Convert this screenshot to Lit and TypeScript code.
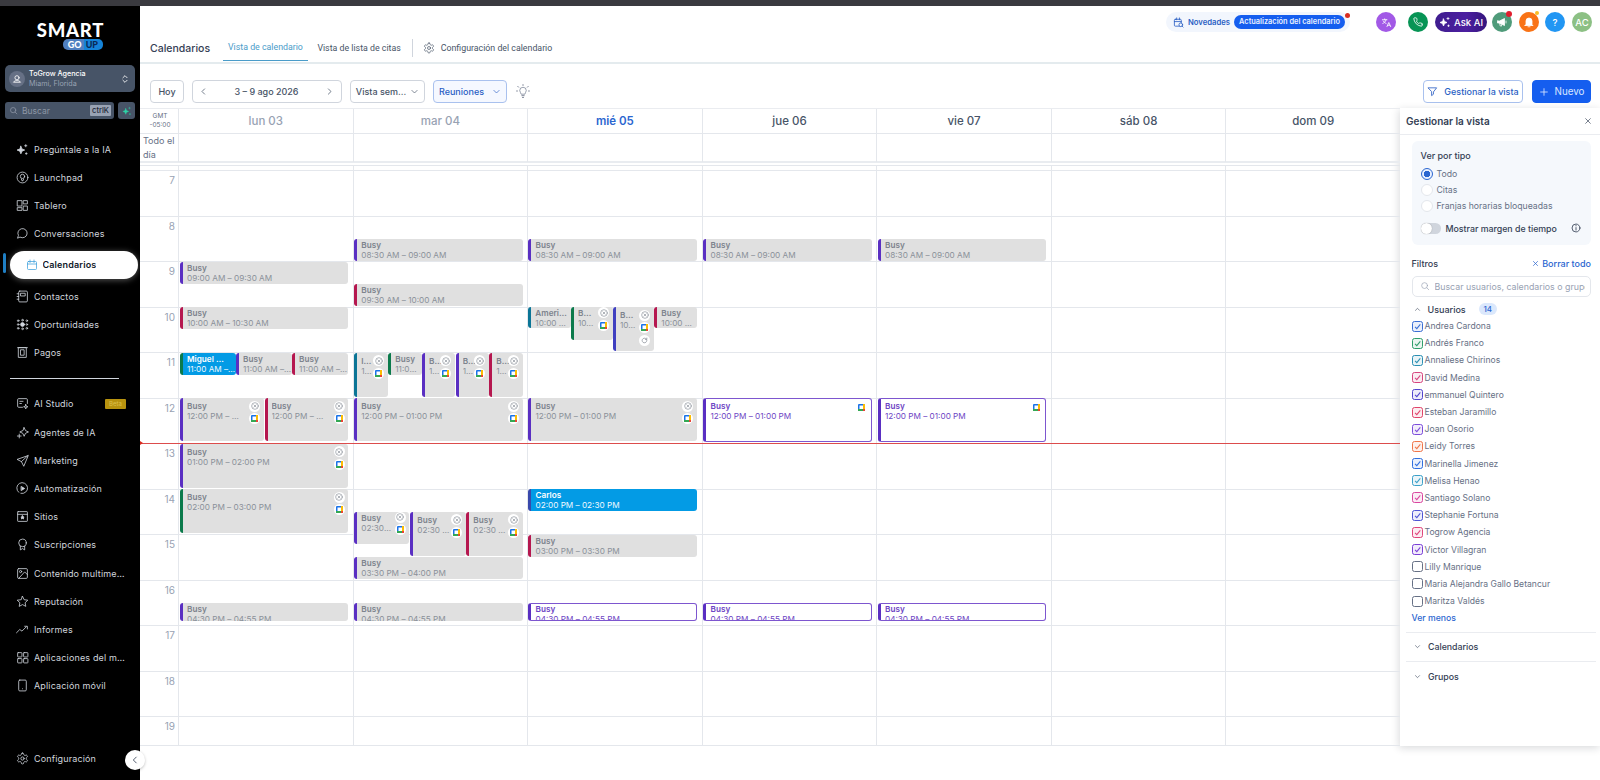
import { LitElement, css, html, svg } from "lit";
import { customElement } from "lit/decorators.js";

const ICONS: Record<string, unknown> = {
  spark: svg`<path d="M9 6l2 5 5 2-5 2-2 5-2-5-5-2 5-2z" fill="currentColor"/><path d="M18 3v4M16 5h4M19 18v3M17.5 19.500h3"/>`,
  launch: svg`<circle cx="12" cy="12" r="10"/><circle cx="12" cy="10" r="4"/><path d="M10 15l1 3h2l1-3"/>`,
  board: svg`<rect x="3" y="3" width="8" height="10"/><rect x="14" y="3" width="7" height="6"/><rect x="14" y="13" width="7" height="8"/><rect x="3" y="16" width="8" height="5"/>`,
  chat: svg`<path d="M3 20l1.500-4.500A8.500 8.500 0 1 1 8 19z"/>`,
  cal: svg`<rect x="3" y="5" width="18" height="16" rx="2"/><path d="M3 10h18M8 2v5M16 2v5"/>`,
  contact: svg`<rect x="5" y="2" width="16" height="20" rx="2"/><rect x="9" y="6" width="8" height="5"/><path d="M2 7h3M2 12h3M2 17h3"/>`,
  opp: svg`<circle cx="12" cy="12" r="3.500" fill="currentColor"/><circle cx="4" cy="5" r="1.500"/><circle cx="4" cy="12" r="1.500"/><circle cx="4" cy="19" r="1.500"/><circle cx="20" cy="5" r="1.500"/><circle cx="20" cy="12" r="1.500"/><circle cx="20" cy="19" r="1.500"/><circle cx="12" cy="4" r="1.500"/><circle cx="12" cy="20" r="1.500"/>`,
  pay: svg`<rect x="5" y="3" width="14" height="18"/><rect x="9" y="7" width="6" height="10"/><path d="M3 3h18"/>`,
  studio: svg`<path d="M12 19H5a2 2 0 0 1-2-2V5a2 2 0 0 1 2-2h14a2 2 0 0 1 2 2v7"/><path d="M7 8h6M7 12h3"/><path d="M18 14l1 3 3 1-3 1-1 3-1-3-3-1 3-1z"/>`,
  agent: svg`<path d="M15 3l2.500 5.500L23 11l-5.500 2.500L15 19l-2.500-5.500L7 11l5.500-2.500z"/><path d="M6 15v7M2.500 18.500h7"/>`,
  send: svg`<path d="M22 3L2 10l8 4 4 8z"/><path d="M22 3L10 14"/>`,
  auto: svg`<path d="M5 19a10 10 0 1 1 4 2"/><path d="M10 8.500l6 3.500-6 3.500z" fill="currentColor"/>`,
  site: svg`<rect x="3" y="3" width="18" height="18" rx="1"/><path d="M3 8h18"/><path d="M12 10.500l1 2 2 .500-1.500 1.500.500 2-2-1-2 1 .500-2L9 13l2-.500z" fill="currentColor"/>`,
  sub: svg`<circle cx="12" cy="9" r="7"/><path d="M8 15v7l4-2.500 4 2.500v-7"/>`,
  media: svg`<rect x="3" y="3" width="18" height="18" rx="2"/><circle cx="8.500" cy="8.500" r="2"/><path d="M21 14l-5-5L5 21"/>`,
  star: svg`<path d="M12 2.500l3 6.200 6.800.900-5 4.700 1.300 6.700-6.100-3.300L5.900 21l1.300-6.700-5-4.700L9 8.700z"/>`,
  trend: svg`<path d="M1 18l6-6 4 3 8-8"/><path d="M16 6h5v5"/>`,
  apps: svg`<rect x="3" y="3" width="8" height="8" rx="1"/><rect x="14" y="3" width="8" height="8" rx="1"/><rect x="3" y="14" width="8" height="8" rx="1"/><rect x="14" y="14" width="8" height="8" rx="1"/>`,
  phone: svg`<rect x="5" y="2" width="14" height="20" rx="2"/><path d="M12 18h.01"/>`,
  gear: svg`<path d="M12.220 2h-.440a2 2 0 0 0-2 2v.180a2 2 0 0 1-1 1.730l-.430.250a2 2 0 0 1-2 0l-.150-.080a2 2 0 0 0-2.730.730l-.220.380a2 2 0 0 0 .730 2.730l.150.100a2 2 0 0 1 1 1.720v.510a2 2 0 0 1-1 1.740l-.150.090a2 2 0 0 0-.730 2.730l.220.380a2 2 0 0 0 2.730.730l.150-.080a2 2 0 0 1 2 0l.430.250a2 2 0 0 1 1 1.730V20a2 2 0 0 0 2 2h.440a2 2 0 0 0 2-2v-.180a2 2 0 0 1 1-1.730l.430-.250a2 2 0 0 1 2 0l.150.080a2 2 0 0 0 2.730-.730l.220-.390a2 2 0 0 0-.730-2.730l-.150-.080a2 2 0 0 1-1-1.740v-.500a2 2 0 0 1 1-1.740l.150-.090a2 2 0 0 0 .730-2.730l-.220-.380a2 2 0 0 0-2.730-.730l-.150.080a2 2 0 0 1-2 0l-.430-.250a2 2 0 0 1-1-1.730V4a2 2 0 0 0-2-2z"/><circle cx="12" cy="12" r="3"/>`,
  search: svg`<circle cx="11" cy="11" r="7"/><path d="M21 21l-4.500-4.500"/>`,
  updown: svg`<path d="M7 9l5-5 5 5M7 15l5 5 5-5"/>`,
  left: svg`<path d="M15 5l-7 7 7 7"/>`,
  right: svg`<path d="M9 5l7 7-7 7"/>`,
  down: svg`<path d="M5 9l7 7 7-7"/>`,
  up: svg`<path d="M5 15l7-7 7 7"/>`,
  bulb: svg`<path d="M8 17c0-2-3-3.500-3-7a7 7 0 0 1 14 0c0 3.500-3 5-3 7z" transform="translate(2.400 3.200) scale(.8)"/><path d="M10 20h4M11 23h2M12 1v1.500M3 4l1.500 1.500M21 4l-1.500 1.500M1 12h1.500M21.500 12H23"/>`,
  filter: svg`<path d="M3 4h18l-7 9v5l-4 3v-8z"/>`,
  plus: svg`<path d="M12 4v16M4 12h16"/>`,
  x: svg`<path d="M5 5l14 14M19 5L5 19"/>`,
  xc: svg`<circle cx="12" cy="12" r="10"/><path d="M8.500 8.500l7 7M15.500 8.500l-7 7"/>`,
  info: svg`<circle cx="12" cy="12" r="9.500"/><path d="M12 6v1M12 11v6"/>`,
  news: svg`<rect x="3" y="5" width="15" height="15" rx="2"/><path d="M3 10h15M8 2v4M14 2v4"/><circle cx="17" cy="17" r="4" fill="#f2f6fd"/><path d="M20 20l2 2"/>`,
  translate: svg`<path d="M3 6h10M8 4v2M11 6c-1 4-4 7-7 8M5 9c1 2 3 4 6 5"/><path d="M13 21l4-9 4 9M14.500 18h5"/>`,
  tel: svg`<path d="M22 17v3a2 2 0 0 1-2.200 2A19.800 19.800 0 0 1 2 4.200 2 2 0 0 1 4 2h3a2 2 0 0 1 2 1.700c.100 1 .400 1.900.700 2.800a2 2 0 0 1-.500 2.100L8 9.900a16 16 0 0 0 6 6l1.300-1.200a2 2 0 0 1 2.100-.500c.900.300 1.800.600 2.800.700A2 2 0 0 1 22 17z"/>`,
  mega: svg`<path d="M3 10v4h4l10 5V5L7 10z" fill="currentColor"/><path d="M7 14l1.500 6h3L10 15M20 10v4"/>`,
  bell: svg`<path d="M6 17V10a6 6 0 0 1 12 0v7l2 2H4z" fill="currentColor"/><path d="M10 21.500h4"/>`,
  user: svg`<circle cx="12" cy="9" r="5"/><path d="M4 19c2-3 5-3 8-3s6 0 8 3z"/>`,
  refresh: svg`<path d="M20 12a8 8 0 1 1-2.500-5.800L20 8.500M20 3.500v5h-5"/>`,
};

const ico = (name: string, size = 14, sw = 1.6) =>
  html`<svg class="ico" width=${size} height=${size} viewBox="0 0 24 24" fill="none" stroke="currentColor" stroke-width=${sw} stroke-linecap="round" stroke-linejoin="round">${ICONS[name]}</svg>`;

const gcal = html`<svg width="7" height="7" viewBox="0 0 7 7"><rect width="7" height="7" rx="1" fill="#1a73e8"/><rect x="5" width="2" height="5" fill="#fbbc04"/><rect y="5" width="5" height="2" fill="#34a853"/><rect x="5" y="5" width="2" height="2" fill="#ea4335"/><rect x="1.500" y="1.500" width="3.500" height="3.500" fill="#fff"/></svg>`;

const nav1 = [
  ["spark", "Pregúntale a la IA"],
  ["launch", "Launchpad"],
  ["board", "Tablero"],
  ["chat", "Conversaciones"],
  ["cal", "Calendarios"],
  ["contact", "Contactos"],
  ["opp", "Oportunidades"],
  ["pay", "Pagos"],
];
const nav2 = [
  ["studio", "AI Studio"],
  ["agent", "Agentes de IA"],
  ["send", "Marketing"],
  ["auto", "Automatización"],
  ["site", "Sitios"],
  ["sub", "Suscripciones"],
  ["media", "Contenido multimedia"],
  ["star", "Reputación"],
  ["trend", "Informes"],
  ["apps", "Aplicaciones del mercado"],
  ["phone", "Aplicación móvil"],
];

const days = ["lun 03", "mar 04", "mié 05", "jue 06", "vie 07", "sáb 08", "dom 09"];
const hours = [7, 8, 9, 10, 11, 12, 13, 14, 15, 16, 17, 18, 19];

const P = "#5a2fc2";
const C = "#b5174f";
const G = "#0b7a4b";
const T = "#0b7596";
const I = "#3f3fc0";

interface Ev {
  d: number;
  s: number;
  h: number;
  x: number;
  w: number;
  bar: string;
  t: string;
  time: string;
  k?: "blue" | "line";
  icons?: number;
  tall?: boolean;
}

const span = (d: number, s: number, h: number, bar: string, time: string, icons = 0, k?: "blue" | "line", t = "Busy"): Ev => {
  const x = [180, 354.3, 528.5, 703.5, 878][d];
  return { d, s, h, x, w: d === 0 ? 168 : 168.4, bar, t, time, icons, k, tall: h > 40 };
};

const events: Ev[] = [
  span(0, 9, 22, P, "09:00 AM – 09:30 AM"),
  span(0, 10, 22, C, "10:00 AM – 10:30 AM"),
  { d: 0, s: 11, h: 22, x: 180, w: 55.5, bar: G, t: "Miguel …", time: "11:00 AM – 11:30 AM", k: "blue" },
  { d: 0, s: 11, h: 22, x: 236, w: 55.5, bar: P, t: "Busy", time: "11:00 AM – 11:30 AM" },
  { d: 0, s: 11, h: 22, x: 292, w: 56, bar: C, t: "Busy", time: "11:00 AM – 11:30 AM" },
  { d: 0, s: 12, h: 43, x: 180, w: 83.500, bar: P, t: "Busy", time: "12:00 PM – 01:00 PM", icons: 2, tall: true },
  { d: 0, s: 12, h: 43, x: 264.500, w: 83.500, bar: C, t: "Busy", time: "12:00 PM – 01:00 PM", icons: 2, tall: true },
  span(0, 13, 44, P, "01:00 PM – 02:00 PM", 2),
  span(0, 14, 44, G, "02:00 PM – 03:00 PM", 2),
  span(0, 16.5, 18, P, "04:30 PM – 04:55 PM"),

  span(1, 8.5, 22, P, "08:30 AM – 09:00 AM"),
  span(1, 9.5, 22, C, "09:30 AM – 10:00 AM"),
  { d: 1, s: 11, h: 44, x: 354.3, w: 33.4, bar: T, t: "I…", time: "1…", icons: 2, tall: true },
  { d: 1, s: 11, h: 22, x: 388.3, w: 33.4, bar: G, t: "Busy", time: "11:00 AM" },
  { d: 1, s: 11, h: 44, x: 422, w: 33, bar: P, t: "B…", time: "1…", icons: 2, tall: true },
  { d: 1, s: 11, h: 44, x: 455.7, w: 33, bar: P, t: "B…", time: "1…", icons: 2, tall: true },
  { d: 1, s: 11, h: 44, x: 489.3, w: 33.4, bar: C, t: "B…", time: "1…", icons: 2, tall: true },
  span(1, 12, 43, P, "12:00 PM – 01:00 PM", 2),
  { d: 1, s: 14.5, h: 32, x: 354.3, w: 55, bar: P, t: "Busy", time: "02:30 PM – 03:00 PM", icons: 2 },
  { d: 1, s: 14.5, h: 44, x: 410.3, w: 55.500, bar: P, t: "Busy", time: "02:30 PM – 03:30 PM", icons: 2, tall: true },
  { d: 1, s: 14.5, h: 44, x: 466.3, w: 56.400, bar: C, t: "Busy", time: "02:30 PM – 03:30 PM", icons: 2, tall: true },
  span(1, 15.5, 22, P, "03:30 PM – 04:00 PM"),
  span(1, 16.5, 18, P, "04:30 PM – 04:55 PM"),

  span(2, 8.5, 22, P, "08:30 AM – 09:00 AM"),
  { d: 2, s: 10, h: 21, x: 528.3, w: 42.4, bar: T, t: "Ameri…", time: "10:00 AM – 10:30 AM" },
  { d: 2, s: 10, h: 33, x: 571, w: 41.7, bar: G, t: "B…", time: "10…", icons: 2 },
  { d: 2, s: 10, h: 44, x: 613, w: 41, bar: I, t: "B…", time: "10…", icons: 3, tall: true },
  { d: 2, s: 10, h: 21, x: 654.3, w: 42.4, bar: C, t: "Busy", time: "10:00 AM – 10:30 AM" },
  span(2, 12, 43, P, "12:00 PM – 01:00 PM", 2),
  span(2, 14, 22, "#3949ab", "02:00 PM – 02:30 PM", 0, "blue", "Carlos"),
  span(2, 15, 22, C, "03:00 PM – 03:30 PM"),
  span(2, 16.5, 18, P, "04:30 PM – 04:55 PM", 0, "line"),

  span(3, 8.5, 22, P, "08:30 AM – 09:00 AM"),
  span(3, 12, 44, P, "12:00 PM – 01:00 PM", 1, "line"),
  span(3, 16.5, 18, P, "04:30 PM – 04:55 PM", 0, "line"),

  span(4, 8.5, 22, P, "08:30 AM – 09:00 AM"),
  span(4, 12, 44, P, "12:00 PM – 01:00 PM", 1, "line"),
  span(4, 16.5, 18, P, "04:30 PM – 04:55 PM", 0, "line"),
];

const users = [
  ["Andrea Cardona", "#3b6fd4", 1],
  ["Andrés Franco", "#2e9e6b", 1],
  ["Annaliese Chirinos", "#2b8fb3", 1],
  ["David Medina", "#d6457f", 1],
  ["emmanuel Quintero", "#5145cd", 1],
  ["Esteban Jaramillo", "#e0446a", 1],
  ["Joan Osorio", "#7c4ddb", 1],
  ["Leidy Torres", "#f0764a", 1],
  ["Marinella Jimenez", "#2f6fe0", 1],
  ["Melisa Henao", "#3ba0c9", 1],
  ["Santiago Solano", "#d946a0", 1],
  ["Stephanie Fortuna", "#4f55d4", 1],
  ["Togrow Agencia", "#e0457b", 1],
  ["Victor Villagran", "#7a3fd6", 1],
  ["Lilly Manrique", "#667085", 0],
  ["Maria Alejandra Gallo Betancur", "#667085", 0],
  ["Maritza Valdés", "#667085", 0],
] as const;

@customElement("app-root")
export class AppRoot extends LitElement {
  static styles = css`
    :host {
      display: block;
      width: 1600px;
      height: 780px;
      overflow: hidden;
      background: #fff;
      font-family: Inter, "Liberation Sans", sans-serif;
      color: #344054;
    }
    .ico {
      flex: none;
      display: block;
    }
    .strip {
      height: 6px;
      background: #3a3a3f;
    }
    .page {
      display: flex;
      height: 774px;
    }

    /* sidebar */
    .side {
      position: relative;
      flex: none;
      width: 140px;
      background: #000;
      display: flex;
      flex-direction: column;
      font-family: Inter, sans-serif;
    }
    .logo {
      height: 59px;
      padding-top: 16px;
      box-sizing: border-box;
      display: flex;
      flex-direction: column;
      align-items: center;
      color: #fff;
    }
    .logo b {
      font: 900 18.5px/16px Lato, sans-serif;
      letter-spacing: 0.8px;
      padding-left: 1px;
    }
    .logo .go {
      align-self: flex-end;
      margin: 1px 37px 0 0;
      display: flex;
      font: 900 9px/11px Lato, sans-serif;
    }
    .logo .go span {
      padding: 0 2px 0 5px;
      border-radius: 5px 0 0 5px;
      background: #4f7fc0;
    }
    .logo .go span + span {
      padding: 0 5px 0 2px;
      border-radius: 0 5px 5px 0;
      background: #1583d8;
      color: #0b2a55;
    }
    .chip {
      margin: 0 5px;
      height: 27px;
      border-radius: 5px;
      background: #475467;
      display: flex;
      align-items: center;
      padding: 0 5px 0 4px;
      color: #fff;
    }
    .chip .av {
      width: 16px;
      height: 16px;
      border-radius: 50%;
      background: #667085;
      display: grid;
      place-items: center;
      margin-right: 4px;
      flex: none;
    }
    .chip div.n {
      flex: 1;
      font-size: 7.2px;
      line-height: 9.5px;
      font-weight: 500;
    }
    .chip small {
      display: block;
      font-size: 7.2px;
      font-weight: 400;
      color: #98a2b3;
    }
    .find {
      display: flex;
      gap: 4px;
      margin: 10px 5px 0;
      height: 17px;
    }
    .find .box {
      flex: 1;
      background: #475467;
      border-radius: 3px;
      display: flex;
      align-items: center;
      gap: 4px;
      padding: 0 3px 0 4px;
      color: #8d96a5;
      font-size: 8.500px;
    }
    .find .box span {
      flex: 1;
    }
    .find kbd {
      font: 500 7.500px/11px Inter, sans-serif;
      background: #98a2b3;
      color: #1d2939;
      padding: 0 2px;
      border-radius: 1px;
    }
    .find .go {
      width: 17px;
      background: #475467;
      border-radius: 3px;
      display: grid;
      place-items: center;
      color: #2dd4a7;
    }
    .nav {
      margin-top: 16px;
    }
    .item {
      height: 28.2px;
      display: flex;
      align-items: center;
      gap: 5px;
      padding-left: 16px;
      font-size: 9px;
      letter-spacing: 0.15px;
      color: #d0d5dd;
      white-space: nowrap;
    }
    .item .lbl {
      max-width: 91px;
      overflow: hidden;
      text-overflow: ellipsis;
    }
    .item.on {
      position: relative;
      height: 27.6px;
      margin: 3.3px 2px 3.3px 10px;
      padding-left: 15.5px;
      background: #fff;
      border-radius: 14px;
      box-shadow: 0 1px 6px rgba(255, 255, 255, 0.35);
      color: #101828;
      font-weight: 600;
    }
    .item.on .ico {
      color: #3ea0dc;
    }
    .item.on::before {
      content: "";
      position: absolute;
      left: -7px;
      top: 2px;
      width: 3px;
      height: 20px;
      border-radius: 2px;
      background: #1f7fc4;
    }
    .rule {
      height: 1px;
      background: #d0d5dd;
      margin: 11px 21px 11.4px 10px;
    }
    .beta {
      margin-left: auto;
      margin-right: 14px;
      width: 21px;
      height: 10px;
      background: #b8930f;
      border-radius: 1px;
      color: #dcc04c;
      font-size: 6px;
      line-height: 10px;
      text-align: center;
      letter-spacing: 0;
    }
    .spring {
      flex: 1;
    }
    .foot {
      margin-bottom: 7px;
    }
    .fold {
      position: absolute;
      right: -4.500px;
      bottom: 10px;
      width: 20px;
      height: 20px;
      border-radius: 50%;
      background: #fff;
      color: #344054;
      display: grid;
      place-items: center;
      box-shadow: 0 1px 3px rgba(0, 0, 0, 0.25);
    }

    /* main column */
    .main {
      flex: 1;
      min-width: 0;
      display: flex;
      flex-direction: column;
    }
    .head {
      height: 56px;
      border-bottom: 2px solid #e4ebee;
    }
    .acts {
      height: 32px;
      display: flex;
      align-items: center;
      justify-content: flex-end;
      padding-right: 8px;
    }
    .news {
      position: relative;
      width: 184px;
      height: 20px;
      box-sizing: border-box;
      border-radius: 10px;
      background: #f2f6fd;
      color: #2b5fc4;
      display: flex;
      align-items: center;
      gap: 4px;
      padding-left: 7px;
      font-size: 7.7px;
      font-weight: 600;
      margin-right: 26px;
    }
    .news em {
      font-style: normal;
      font-size: 7.4px;
      background: #155eef;
      color: #e8f0ff;
      border-radius: 7px;
      line-height: 14px;
      height: 14px;
      padding: 0 5px;
      white-space: nowrap;
    }
    .news i {
      position: absolute;
      right: 0;
      top: 1px;
      width: 5px;
      height: 5px;
      border-radius: 50%;
      background: #d92d20;
    }
    .round {
      position: relative;
      flex: none;
      width: 20px;
      height: 20px;
      border-radius: 50%;
      display: grid;
      place-items: center;
      color: #fff;
      font-size: 9.5px;
      font-weight: 500;
    }
    .round i {
      position: absolute;
      right: 0;
      top: -1px;
      width: 6px;
      height: 6px;
      border-radius: 50%;
    }
    .ask {
      flex: none;
      width: 52px;
      height: 20px;
      border-radius: 10px;
      background: linear-gradient(90deg, #3f1d8f, #4c1fa0 60%, #34157c);
      color: #fff;
      display: flex;
      align-items: center;
      justify-content: center;
      gap: 3px;
      font-size: 9.5px;
      font-weight: 500;
      margin: 0 5px 0 7px;
    }
    .tabs {
      height: 23px;
      display: flex;
      align-items: stretch;
      padding-left: 10px;
      font-family: Roboto, sans-serif;
      font-size: 8.8px;
      color: #475467;
    }
    .tabs h1 {
      margin: 0 13px 0 0;
      width: 60px;
      font: 500 10.5px/17px Inter, sans-serif;
      color: #344054;
      align-self: center;
      padding-bottom: 3px;
    }
    .tab {
      display: flex;
      align-items: center;
      padding: 0 5px 4px;
      margin-right: 6px;
    }
    .tab.on {
      color: #4a9cc9;
      border-bottom: 1px solid #4a9cc9;
      margin-right: 4.5px;
    }
    .tab.last {
      padding-left: 10px;
      gap: 6px;
      margin-left: 0;
      position: relative;
    }
    .vr {
      width: 1px;
      height: 18px;
      background: #d0d5dd;
      margin-top: 1px;
    }
    .bar {
      height: 44px;
      box-sizing: border-box;
      padding: 16px 9px 0 10px;
      display: flex;
      align-items: flex-start;
      gap: 8px;
      font-size: 9px;
      font-weight: 500;
      color: #475467;
    }
    .btn {
      height: 23px;
      box-sizing: border-box;
      border: 1px solid #d0d5dd;
      border-radius: 4px;
      background: #fff;
      display: flex;
      align-items: center;
      justify-content: center;
      white-space: nowrap;
    }
    .btn.date {
      width: 150px;
      justify-content: space-between;
      padding: 0 7px 0 6px;
    }
    .btn.view {
      width: 75px;
      gap: 4px;
    }
    .btn.meet {
      width: 74px;
      gap: 8px;
      background: #f5f8ff;
      border-color: #a9c1ee;
      color: #2b5fc4;
    }
    .btn.manage {
      width: 100px;
      gap: 6px;
      margin-left: auto;
      border-color: #a9c1ee;
      color: #2b5fc4;
    }
    .btn.add {
      width: 59px;
      margin-left: 1px;
      background: #155eef;
      border-color: #155eef;
      color: #dbe7ff;
      gap: 6px;
      font-size: 9.800px;
      font-weight: 400;
    }
    .bulb {
      color: #667085;
      margin: 4px 0 0 1px;
    }

    /* calendar */
    .cal {
      flex: 1;
      display: flex;
      min-height: 0;
      align-items: flex-start;
    }
    .grid {
      flex: none;
      width: 1260px;
      position: relative;
    }
    .cols {
      display: grid;
      grid-template-columns: 38px repeat(7, 1fr);
    }
    .dayhead {
      height: 26px;
      box-sizing: border-box;
      border-top: 1px solid #eaecf0;
      border-bottom: 1px solid #e4e7ec;
    }
    .dayhead > div {
      border-left: 1px solid #e4e7ec;
      display: grid;
      place-items: center;
      font-size: 11.5px;
      font-weight: 500;
      color: #475467;
    }
    .dayhead > div.past {
      color: #98a2b3;
    }
    .dayhead > div.today {
      color: #2b66d0;
      font-weight: 600;
    }
    .dayhead > div.gmt {
      border-left: 0;
      font-size: 6.5px;
      font-weight: 400;
      line-height: 9px;
      text-align: center;
      color: #667085;
      padding-left: 2px;
    }
    .allday {
      height: 29px;
      box-sizing: border-box;
      border-bottom: 2px solid #e9ecf0;
    }
    .allday > div {
      border-left: 1px solid #e4e7ec;
    }
    .allday > div.lab {
      border-left: 0;
      font-size: 9px;
      line-height: 14px;
      padding: 0 0 0 3px;
      color: #667085;
    }
    .body {
      position: relative;
      margin-top: 2px;
      height: 581px;
      border-top: 1px solid #e4e7ec;
      border-bottom: 1px solid #e4e7ec;
      box-sizing: border-box;
      overflow: hidden;
    }
    .body .cols {
      height: 100%;
    }
    .col {
      position: relative;
      border-left: 1px solid #e4e7ec;
      padding-top: 4px;
      box-sizing: border-box;
    }
    .col.times {
      border-left: 0;
    }
    .hr {
      height: 45.5px;
      box-sizing: border-box;
      border-top: 1px solid #e4e7ec;
    }
    .times .hr {
      text-align: right;
      padding: 3px 3px 0 0;
      font-size: 10px;
      line-height: 13px;
      color: #98a2b3;
    }
    .ev {
      position: absolute;
      box-sizing: border-box;
      background: #e0e0e0;
      border-radius: 3px;
      border-left: 3px solid;
      padding: 1px 0 0 4px;
      font-size: 8.2px;
      line-height: 10px;
      color: #8a9099;
      overflow: hidden;
      white-space: nowrap;
    }
    .ev.tall {
      padding-top: 3px;
    }
    .ev b,
    .ev span {
      display: block;
      overflow: hidden;
      text-overflow: ellipsis;
    }
    .ev b {
      font-weight: 600;
      color: #7d838d;
    }
    .ev.blue {
      background: #039be5;
      color: #f0f9ff;
    }
    .ev.blue b {
      color: #fff;
    }
    .ev.line {
      background: #fff;
      color: #6d45c4;
      border: 1px solid #7d56cf;
      border-left: 3px solid #4f2bb0;
      padding-top: 0;
    }
    .ev.line.tall {
      padding-top: 2px;
    }
    .ev.line b {
      color: #6d45c4;
    }
    .marks {
      position: absolute;
      right: 3.500px;
      top: 0;
      display: flex;
      flex-direction: column;
      gap: 1.500px;
    }
    .tall .marks {
      top: 2.500px;
    }
    .mark {
      width: 11px;
      height: 11px;
      border-radius: 50%;
      background: #fff;
      color: #8a9099;
      display: grid;
      place-items: center;
    }
    .line .mark {
      background: none;
    }
    .now {
      position: absolute;
      left: 0;
      right: 0;
      top: 277px;
      height: 1px;
      background: #dc4c4c;
    }
    .now::before {
      content: "";
      position: absolute;
      left: 0;
      top: -2px;
      border-left: 3px solid #d92d20;
      border-top: 2.500px solid transparent;
      border-bottom: 2.500px solid transparent;
    }

    /* manage panel */
    .panel {
      flex: none;
      width: 200px;
      height: 638px;
      box-sizing: border-box;
      background: #fff;
      box-shadow: -1px 2px 8px rgba(16, 24, 40, 0.16);
      font-size: 8.7px;
      color: #667085;
    }
    .ptitle {
      height: 26px;
      border-bottom: 1px solid #eaecf0;
      display: flex;
      align-items: center;
      justify-content: space-between;
      padding: 0 8px 0 6px;
      font-size: 10px;
      font-weight: 600;
      color: #344054;
    }
    .pinner {
      padding: 6px 9px 0 11.500px;
    }
    .types {
      background: #f5f8fc;
      border-radius: 6px;
      height: 104px;
      box-sizing: border-box;
      padding: 9px 9px 0;
    }
    .types h3 {
      margin: 0 0 4px;
      font-size: 9px;
      line-height: 12px;
      font-weight: 500;
      color: #344054;
    }
    .radio {
      height: 16px;
      display: flex;
      align-items: center;
      gap: 4px;
    }
    .radio i {
      width: 10px;
      height: 10px;
      border: 1px solid #e4e7ec;
      background: #fff;
      border-radius: 50%;
      flex: none;
    }
    .radio i.on {
      border-color: #2b66d0;
      background: radial-gradient(circle, #2b66d0 0 3px, #e8f0ff 3.500px);
    }
    .tog {
      display: flex;
      align-items: center;
      gap: 5px;
      margin-top: 5px;
      height: 18px;
      font-size: 8.8px;
      font-weight: 500;
      color: #344054;
    }
    .tog i {
      position: relative;
      width: 20px;
      height: 11px;
      border-radius: 6px;
      background: #d0d5dd;
      flex: none;
    }
    .tog i::after {
      content: "";
      position: absolute;
      left: 0;
      top: 0;
      width: 11px;
      height: 11px;
      border-radius: 50%;
      background: #fff;
      box-shadow: 0 0 1px rgba(0, 0, 0, 0.4);
    }
    .tog .ico {
      margin-left: auto;
      margin-right: 1px;
    }
    .fhead {
      display: flex;
      justify-content: space-between;
      margin-top: 12.5px;
      font-size: 9px;
      font-weight: 500;
      line-height: 12px;
      color: #344054;
    }
    .fhead a {
      display: flex;
      align-items: center;
      gap: 3px;
      color: #2b66d0;
    }
    .fsearch {
      margin-top: 6px;
      height: 21px;
      box-sizing: border-box;
      border: 1px solid #e4e7ec;
      border-radius: 5px;
      display: flex;
      align-items: center;
      gap: 5px;
      padding: 0 5px 0 7px;
      color: #98a2b3;
      white-space: nowrap;
      overflow: hidden;
      font-size: 8.8px;
    }
    .fsearch span {
      overflow: hidden;
    }
    .sec {
      display: flex;
      align-items: center;
      margin-top: 5.5px;
      height: 14px;
      font-size: 9px;
      font-weight: 500;
      color: #344054;
      padding-left: 2px;
      gap: 5px;
    }
    .sec u {
      text-decoration: none;
      width: 18px;
      height: 12px;
      line-height: 12px;
      border-radius: 6px;
      background: #dbe8fc;
      color: #2b66d0;
      text-align: center;
      font-size: 8px;
      margin-left: 8px;
    }
    .users {
      margin-top: 1.500px;
    }
    .user {
      height: 17.2px;
      display: flex;
      align-items: center;
      gap: 2px;
      font-size: 8.6px;
      white-space: nowrap;
    }
    .check {
      width: 11px;
      height: 11px;
      box-sizing: border-box;
      border: 1px solid;
      border-radius: 2.500px;
      display: grid;
      place-items: center;
      flex: none;
    }
    .more {
      color: #2b66d0;
      font-weight: 500;
      font-size: 8.7px;
      line-height: 17px;
      margin-bottom: 5px;
    }
    .fold-sec {
      height: 28.5px;
      border-top: 1px solid #eaecf0;
      margin: 0 -5px 0 -5.500px;
      padding-left: 8px;
      display: flex;
      align-items: center;
      gap: 5px;
      font-size: 8.8px;
      font-weight: 500;
      color: #344054;
    }
  `;

  private renderNav(list: string[][]) {
    return list.map(
      ([icon, label]) => html`<div class="item ${label === "Calendarios" ? "on" : ""}">
        ${ico(icon, label === "Calendarios" ? 12 : 13, 1.5)}
        <span class="lbl">${label}</span>
        ${label === "AI Studio" ? html`<span class="beta">Beta</span>` : ""}
      </div>`
    );
  }

  private renderEvent(e: Ev) {
    const colX = 178 + (1222 / 7) * e.d;
    const left = e.x - colX - 1;
    const top = 4.5 + (e.s - 7) * 45.5;
    const marks = [];
    if (e.k === "line" && e.icons) marks.push(html`<div class="mark">${gcal}</div>`);
    else if (e.icons) {
      marks.push(html`<div class="mark">${ico("xc", 8, 2)}</div>`, html`<div class="mark">${gcal}</div>`);
      if (e.icons === 3) marks.push(html`<div class="mark">${ico("refresh", 7, 2.5)}</div>`);
    }
    const gap = !e.icons ? 0 : e.w < 50 ? 8 : e.w < 60 ? 16 : 24;
    const inset = gap ? `margin-right:${gap}px` : "";
    return html`<div
      class="ev ${e.k ?? ""} ${e.tall ? "tall" : ""}"
      style="left:${left}px;top:${top}px;width:${e.w}px;height:${e.h}px;border-left-color:${e.bar}"
    >
      <b style=${inset}>${e.t}</b>
      <span style=${inset}>${e.time}</span>
      ${marks.length ? html`<div class="marks">${marks}</div>` : ""}
    </div>`;
  }

  render() {
    return html`
      <div class="strip"></div>
      <div class="page">
        <aside class="side">
          <div class="logo"><b>SMART</b><div class="go"><span>GO</span><span>UP</span></div></div>
          <div class="chip">
            <div class="av">${ico("user", 10, 2)}</div>
            <div class="n">ToGrow Agencia<small>Miami, Florida</small></div>
            ${ico("updown", 10, 2)}
          </div>
          <div class="find">
            <div class="box">${ico("search", 9, 2)}<span>Buscar</span><kbd>ctrlK</kbd></div>
            <div class="go">${ico("spark", 10, 1)}</div>
          </div>
          <div class="nav">${this.renderNav(nav1)}</div>
          <div class="rule"></div>
          <div>${this.renderNav(nav2)}</div>
          <div class="spring"></div>
          <div class="foot">${this.renderNav([["gear", "Configuración"]])}</div>
          <div class="fold">${ico("left", 10, 2)}</div>
        </aside>

        <main class="main">
          <header class="head">
            <div class="acts">
              <div class="news">
                ${ico("news", 11, 1.8)}<span>Novedades</span><em>Actualización del calendario</em><i></i>
              </div>
              <div class="round" style="background:#a259e6">${ico("translate", 11, 1.8)}</div>
              <div class="round" style="background:#079455;margin-left:12px">${ico("tel", 10, 2)}</div>
              <div class="ask">${ico("spark", 12, 1.6)}Ask AI</div>
              <div class="round" style="background:#4f9b7a">
                ${ico("mega", 12, 1.6)}<i style="background:#e01e2e"></i>
              </div>
              <div class="round" style="background:#f97316;margin-left:7px">
                ${ico("bell", 12, 1.6)}<i style="background:#fbbf24;width:4px;height:4px"></i>
              </div>
              <div class="round" style="background:#2196f3;margin-left:6px">?</div>
              <div class="round" style="background:#8cc084;margin-left:7px">AC</div>
            </div>
            <nav class="tabs">
              <h1>Calendarios</h1>
              <div class="tab on">Vista de calendario</div>
              <div class="tab">Vista de lista de citas</div>
              <div class="vr"></div>
              <div class="tab last">${ico("gear", 12, 1.4)}Configuración del calendario</div>
            </nav>
          </header>

          <div class="bar">
            <div class="btn" style="width:34px">Hoy</div>
            <div class="btn date">${ico("left", 9, 2)}<span>3 – 9 ago 2026</span>${ico("right", 9, 2)}</div>
            <div class="btn view">Vista sem...${ico("down", 9, 1.8)}</div>
            <div class="btn meet">Reuniones${ico("down", 9, 1.8)}</div>
            <div class="bulb">${ico("bulb", 14, 1.4)}</div>
            <div class="btn manage">${ico("filter", 11, 1.8)}Gestionar la vista</div>
            <div class="btn add">${ico("plus", 10, 2)}Nuevo</div>
          </div>

          <div class="cal">
            <section class="grid">
              <div class="cols dayhead">
                <div class="gmt">GMT<br />-05:00</div>
                ${days.map((d, i) => html`<div class=${i < 2 ? "past" : i === 2 ? "today" : ""}>${d}</div>`)}
              </div>
              <div class="cols allday">
                <div class="lab">Todo el día</div>
                ${days.map(() => html`<div></div>`)}
              </div>
              <div class="body">
                <div class="cols">
                  <div class="col times">${hours.map((h) => html`<div class="hr">${h}</div>`)}</div>
                  ${days.map(
                    (_, i) => html`<div class="col">
                      ${hours.map(() => html`<div class="hr"></div>`)}
                      ${events.filter((e) => e.d === i).map((e) => this.renderEvent(e))}
                    </div>`
                  )}
                </div>
                <div class="now"></div>
              </div>
            </section>

            <aside class="panel">
              <div class="ptitle">Gestionar la vista ${ico("x", 8, 2)}</div>
              <div class="pinner">
                <div class="types">
                  <h3>Ver por tipo</h3>
                  <div class="radio"><i class="on"></i>Todo</div>
                  <div class="radio"><i></i>Citas</div>
                  <div class="radio"><i></i>Franjas horarias bloqueadas</div>
                  <div class="tog"><i></i>Mostrar margen de tiempo ${ico("info", 10, 2)}</div>
                </div>
                <div class="fhead">
                  <span>Filtros</span>
                  <a>${ico("x", 7, 2.5)}Borrar todo</a>
                </div>
                <div class="fsearch">${ico("search", 10, 1.6)}<span>Buscar usuarios, calendarios o grupos</span></div>
                <div class="sec">${ico("up", 7, 2)}<span style="margin-left:2px">Usuarios</span><u>14</u></div>
                <div class="users">
                  ${users.map(
                    ([name, color, on]) => html`<div class="user">
                      <div class="check" style="border-color:${color};color:${color};background:${on ? color + "1a" : "transparent"}">
                        ${on
                          ? html`<svg width="7" height="7" viewBox="0 0 10 10" fill="none" stroke="currentColor" stroke-width="1.500"><path d="M1.500 5.500l2.500 2.500 5-6"/></svg>`
                          : ""}
                      </div>
                      ${name}
                    </div>`
                  )}
                </div>
                <div class="more">Ver menos</div>
                <div class="fold-sec">${ico("down", 7, 2)}<span style="margin-left:2px">Calendarios</span></div>
                <div class="fold-sec">${ico("down", 7, 2)}<span style="margin-left:2px">Grupos</span></div>
              </div>
            </aside>
          </div>
        </main>
      </div>
    `;
  }
}
